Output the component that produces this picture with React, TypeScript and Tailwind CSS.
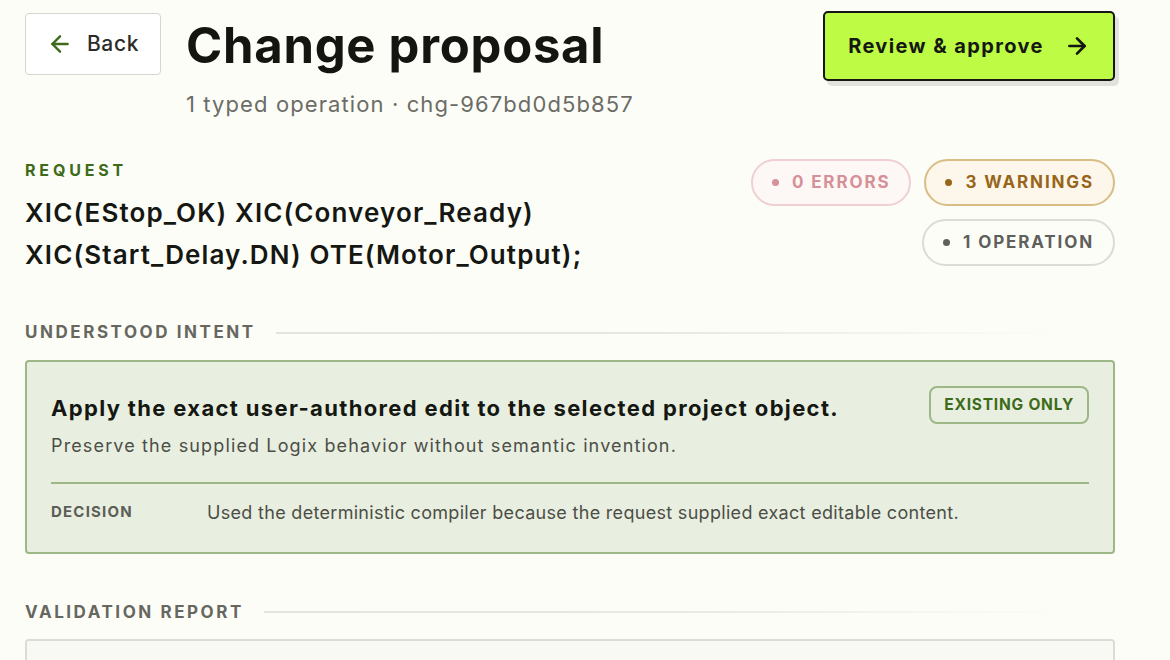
import { ArrowLeft, ArrowRight } from "lucide-react";

const pills = [
  { label: "0 ERRORS", box: "border-[#efcfd2] bg-[#fdf8f6] text-[#d69097]", dot: "bg-[#d69097]" },
  { label: "3 WARNINGS", box: "border-[#d8bd85] bg-[#fcf7ea] text-[#98651a]", dot: "bg-[#98651a]" },
  { label: "1 OPERATION", box: "border-[#dcdcd6] bg-[#fdfdf8] text-[#5f605b]", dot: "bg-[#5f605b]" },
];

function SectionTitle({ children }: { children: string }) {
  return (
    <div className="flex items-center gap-5">
      <h2 className="text-[17px] font-bold tracking-[0.15em] text-[#66675f] uppercase whitespace-nowrap">{children}</h2>
      <div className="h-[2px] flex-1 mr-[55px] bg-gradient-to-r from-[#e4e4df] via-[#e8e8e3] to-transparent" />
    </div>
  );
}

export default function App() {
  return (
    <div className="min-h-screen w-full bg-[#fdfdf8] font-['Inter',sans-serif] text-[#151712] overflow-hidden">
      <div className="px-[25px] pt-[11px] w-[1140px]">
        {/* Header */}
        <div className="flex items-start justify-between">
          <div className="flex items-start gap-[25px]">
            <button className="mt-[2px] flex items-center gap-[14px] h-[62px] w-[136px] justify-center rounded-[4px] border border-[#d6d6d0] bg-white text-[21px] font-medium tracking-[0.03em] text-[#2b2c28]">
              <ArrowLeft className="w-[26px] h-[26px] text-[#3d6b1a]" strokeWidth={2.25} />
              Back
            </button>
            <div>
              <h1 className="mt-[3px] text-[49px] leading-[64px] font-bold tracking-[0.015em] text-[#141511]">Change proposal</h1>
              <p className="mt-[10px] text-[22px] tracking-[0.05em] text-[#6b6c66]">1 typed operation · chg-967bd0d5b857</p>
            </div>
          </div>
          <button className="flex items-center gap-[20px] h-[70px] w-[292px] justify-center rounded-[5px] border-2 border-[#151712] bg-[#bdfb45] text-[20px] font-bold tracking-[0.07em] text-[#151712] shadow-[4px_5px_0_#e2e2dd]">
            Review &amp; approve
            <ArrowRight className="w-[26px] h-[26px]" strokeWidth={2.5} />
          </button>
        </div>

        {/* Request */}
        <div className="mt-[37px] flex items-start justify-between">
          <div>
            <div className="text-[16px] font-bold tracking-[0.24em] text-[#3d6b1a]">REQUEST</div>
            <p className="mt-[10px] text-[26px] leading-[42px] font-semibold text-[#151712] tracking-[0.043em]">
              XIC(EStop_OK) XIC(Conveyor_Ready)
              <br />
              XIC(Start_Delay.DN) OTE(Motor_Output);
            </p>
          </div>
          <div className="mt-[1px] flex flex-wrap justify-end gap-x-[13px] gap-y-[13px] w-[380px]">
            {pills.map((p) => (
              <span key={p.label} className={`flex items-center gap-[13px] h-[47px] px-[19px] rounded-full border-2 text-[17px] font-bold tracking-[0.11em] ${p.box}`}>
                <span className={`w-[7px] h-[7px] rounded-full ${p.dot}`} />
                {p.label}
              </span>
            ))}
          </div>
        </div>

        {/* Understood intent */}
        <div className="mt-[44px]">
          <SectionTitle>Understood intent</SectionTitle>
          <div className="mt-[14px] rounded-[4px] border-2 border-[#9db786] bg-[#e9efe0] px-[24px] pt-[24px] pb-[26px]">
            <div className="flex items-start justify-between">
              <div>
                <h3 className="mt-[6px] text-[22px] font-bold tracking-[0.061em] text-[#151712]">Apply the exact user-authored edit to the selected project object.</h3>
                <p className="mt-[7px] text-[18px] tracking-[0.063em] text-[#4c4e47]">Preserve the supplied Logix behavior without semantic invention.</p>
              </div>
              <span className="flex items-center h-[38px] px-[13px] rounded-[8px] border-2 border-[#9db786] text-[15.5px] font-bold tracking-[0.05em] text-[#3d6b1a]">EXISTING ONLY</span>
            </div>
            <div className="mt-[23px] border-t-2 border-[#9db786]" />
            <div className="mt-[15px] flex items-center">
              <span className="w-[156px] text-[15px] font-bold tracking-[0.08em] text-[#5c5e57]">DECISION</span>
              <span className="text-[18px] tracking-[0.017em] text-[#4c4e47]">Used the deterministic compiler because the request supplied exact editable content.</span>
            </div>
          </div>
        </div>

        {/* Validation report */}
        <div className="mt-[46px]">
          <SectionTitle>Validation report</SectionTitle>
          <div className="mt-[14px] h-[80px] rounded-[4px] border-2 border-[#dcdcd7] bg-[#f8f8f5]" />
        </div>
      </div>
    </div>
  );
}
